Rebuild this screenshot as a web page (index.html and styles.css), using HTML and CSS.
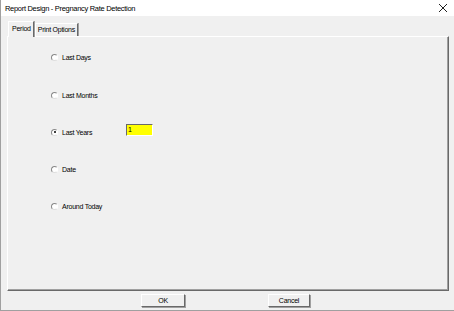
FILE: index.html
```html
<!DOCTYPE html>
<html>
<head>
<meta charset="utf-8">
<link rel="stylesheet" href="styles.css">
</head>
<body>
<div class="window">
  <div class="titlebar">
    <span class="title">Report Design - Pregnancy Rate Detection</span>
    <svg class="close" width="10" height="10" viewBox="0 0 10 10"><path d="M1 1L9 9M9 1L1 9" stroke="#222" stroke-width="1"/></svg>
  </div>
  <div class="content">
    <div class="tabs">
      <div class="tab active">Period</div>
      <div class="tab">Print Options</div>
    </div>
    <div class="panel">
      <div class="row"><span class="radio"></span><span class="label">Last Days</span></div>
      <div class="row"><span class="radio"></span><span class="label">Last Months</span></div>
      <div class="row"><span class="radio checked"></span><span class="label">Last Years</span><span class="input">1</span></div>
      <div class="row"><span class="radio"></span><span class="label">Date</span></div>
      <div class="row"><span class="radio"></span><span class="label">Around Today</span></div>
    </div>
    <div class="buttons">
      <div class="btn ok">OK</div>
      <div class="btn cancel">Cancel</div>
    </div>
  </div>
</div>
</body>
</html>
```
FILE: styles.css
```css
* { box-sizing: border-box; }
html, body { margin: 0; padding: 0; }
body {
  width: 454px; height: 311px; overflow: hidden;
  font-family: "Liberation Sans", Arial, sans-serif;
  font-size: 7px; letter-spacing: -0.25px; color: #000;
  background: #f0f0f0;
}
.window {
  width: 454px; height: 311px;
  border-left: 1px solid #a0a0a0;
  border-bottom: 1px solid #a0a0a0;
  display: flex; flex-direction: column;
}
.titlebar {
  height: 20px; background: #fff;
  display: flex; align-items: center; justify-content: space-between;
  padding: 0 6px 0 4px;
}
.title { font-size: 7.5px; letter-spacing: -0.3px; }
.content { flex: 1; display: flex; flex-direction: column; padding: 0 0 0 6px; }
.tabs { display: flex; height: 16px; margin-top: 4px; padding-left: 1px; align-items: flex-end; }
.tab {
  height: 13px; padding: 0 2px; line-height: 12px;
  border-left: 1px solid #fff; border-top: 1px solid #fff;
  border-right: 1px solid #696969;
  box-shadow: 1px 0 0 #a0a0a0;
  margin-right: 1px;
}
.tab.active {
  height: 16px; line-height: 13px; margin-right: 1px; padding: 0 2px 0 3px;
  position: relative; z-index: 1; background: #f0f0f0; margin-bottom: -1px;
}
.panel {
  width: 442px; height: 255px;
  border-left: 1px solid #fff; border-top: 1px solid #fff;
  border-right: 1px solid #696969; border-bottom: 1px solid #696969;
  box-shadow: inset -1px -1px 0 #a0a0a0;
  display: flex; flex-direction: column; gap: 25.75px;
  padding: 15px 0 0 43px;
}
.row { display: flex; align-items: center; height: 11.5px; }
.radio {
  width: 7px; height: 7px; border-radius: 50%;
  border: 1px solid #888; border-right-color: #fff; border-bottom-color: #ddd;
  background: #fff; position: relative;
  margin-right: 4px;
}
.radio.checked::after {
  content: ""; position: absolute; left: 1.5px; top: 1.5px;
  width: 2px; height: 2px; border-radius: 50%; background: #000;
}
.label { width: 64px; }
.input {
  width: 27px; height: 12px; background: #ffff00;
  border-top: 1px solid #696969; border-left: 1px solid #696969;
  border-right: 1px solid #fff; border-bottom: 1px solid #fff;
  line-height: 10px; padding-left: 1px;
  margin-top: -5px;
}
.buttons { display: flex; height: 19px; align-items: center; padding-left: 134px; gap: 83px; }
.btn {
  height: 13px; text-align: center; line-height: 11px;
  border-left: 1px solid #fff; border-top: 1px solid #fff;
  border-right: 1px solid #696969; border-bottom: 1px solid #696969;
  box-shadow: 1px 1px 0 #a0a0a0;
}
.ok { width: 44px; }
.cancel { width: 42px; }
```
